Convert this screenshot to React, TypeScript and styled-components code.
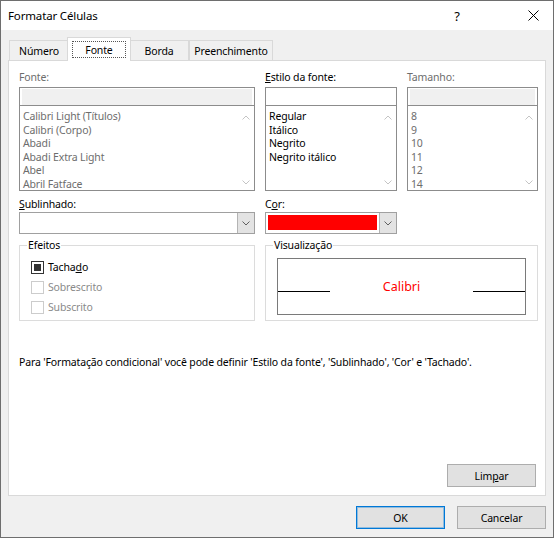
import styled, { createGlobalStyle } from "styled-components";

const GlobalStyle = createGlobalStyle`
  html, body {
    margin: 0;
    padding: 0;
    background: #ffffff;
  }
  body {
    font-family: "Noto Sans", "Liberation Sans", sans-serif;
    font-size: 10.5px;
    letter-spacing: -0.15px;
    color: #000;
  }
  * {
    box-sizing: border-box;
  }
`;

const fontes = [
  "Calibri Light (Títulos)",
  "Calibri (Corpo)",
  "Abadi",
  "Abadi Extra Light",
  "Abel",
  "Abril Fatface",
];
const estilos = ["Regular", "Itálico", "Negrito", "Negrito itálico"];
const tamanhos = ["8", "9", "10", "11", "12", "14"];

const Chevron = ({ up, color }: { up?: boolean; color: string }) => (
  <svg width="8" height="5" viewBox="0 0 8 5">
    <path
      d={up ? "M0.5 4.5 L4 1 L7.5 4.5" : "M0.5 0.5 L4 4 L7.5 0.5"}
      fill="none"
      stroke={color}
      strokeWidth="1"
    />
  </svg>
);

const App = () => {
  return (
    <>
      <GlobalStyle />
      <Window>
        <TitleBar>
          <Title>Formatar Células</Title>
          <TitleButtons>
            <Help>?</Help>
            <Close>
              <svg width="11" height="11" viewBox="0 0 11 11">
                <path d="M0.5 0.5 L10.5 10.5 M10.5 0.5 L0.5 10.5" stroke="#000" strokeWidth="1" />
              </svg>
            </Close>
          </TitleButtons>
        </TitleBar>
        <Body>
          <TabRow>
            <Tab $w={60}>Número</Tab>
            <Tab $w={60} $active>
              <Focus>Fonte</Focus>
            </Tab>
            <Tab $w={60}>Borda</Tab>
            <Tab $w={84}>Preenchimento</Tab>
          </TabRow>
          <Panel>
            <Fields>
              <Field>
                <Label $disabled>Fonte:</Label>
                <TextBox $disabled />
                <ListBox>
                  <Items $disabled>
                    {fontes.map((f) => (
                      <Item key={f}>{f}</Item>
                    ))}
                  </Items>
                  <ScrollTrack>
                    <Chevron up color="#c4c4c4" />
                    <Chevron color="#c4c4c4" />
                  </ScrollTrack>
                </ListBox>
              </Field>
              <Field>
                <Label>
                  <u>E</u>stilo da fonte:
                </Label>
                <TextBox />
                <ListBox>
                  <Items>
                    {estilos.map((f) => (
                      <Item key={f}>{f}</Item>
                    ))}
                  </Items>
                  <ScrollTrack>
                    <Chevron up color="#c4c4c4" />
                    <Chevron color="#c4c4c4" />
                  </ScrollTrack>
                </ListBox>
              </Field>
              <Field>
                <Label $disabled>Tamanho:</Label>
                <TextBox $disabled />
                <ListBox>
                  <Items $disabled>
                    {tamanhos.map((f) => (
                      <Item key={f}>{f}</Item>
                    ))}
                  </Items>
                  <ScrollTrack>
                    <Chevron up color="#c4c4c4" />
                    <Chevron color="#c4c4c4" />
                  </ScrollTrack>
                </ListBox>
              </Field>

              <Field $gap>
                <Label>
                  <u>S</u>ublinhado:
                </Label>
                <Combo>
                  <ComboValue />
                  <ComboButton>
                    <Chevron color="#606060" />
                  </ComboButton>
                </Combo>
              </Field>
              <Field $gap>
                <Label>
                  C<u>o</u>r:
                </Label>
                <Combo>
                  <ComboValue>
                    <Swatch />
                  </ComboValue>
                  <ComboButton>
                    <Chevron color="#606060" />
                  </ComboButton>
                </Combo>
              </Field>
              <div />

              <Group $span={1}>
                <Legend>Efeitos</Legend>
                <CheckRow>
                  <CheckBox $checked />
                  <span>
                    Tacha<u>d</u>o
                  </span>
                </CheckRow>
                <CheckRow $disabled>
                  <CheckBox $disabled />
                  <span>Sobrescrito</span>
                </CheckRow>
                <CheckRow $disabled>
                  <CheckBox $disabled />
                  <span>Subscrito</span>
                </CheckRow>
              </Group>
              <Group $span={2}>
                <Legend>Visualização</Legend>
                <Preview>
                  <Baseline />
                  <Sample>Calibri</Sample>
                  <Baseline />
                </Preview>
              </Group>
            </Fields>
            <Note>
              Para 'Formatação condicional' você pode definir 'Estilo da fonte', 'Sublinhado', 'Cor' e 'Tachado'.
            </Note>
            <PanelActions>
              <Button>
                Lim<u>p</u>ar
              </Button>
            </PanelActions>
          </Panel>
          <Footer>
            <Button $default>OK</Button>
            <Button>Cancelar</Button>
          </Footer>
        </Body>
      </Window>
    </>
  );
};
export default App;

const Window = styled.div`
  width: 554px;
  height: 538px;
  border: 1px solid #6e6e6e;
  background: #f0f0f0;
  display: flex;
  flex-direction: column;
`;

const TitleBar = styled.div`
  height: 29px;
  flex: none;
  background: #ffffff;
  display: flex;
  align-items: center;
  padding-left: 7px;
`;

const Title = styled.div`
  font-size: 11.5px;
  color: #000;
`;

const TitleButtons = styled.div`
  margin-left: auto;
  display: flex;
  align-items: center;
  gap: 55px;
  padding-right: 9px;
`;

const Help = styled.div`
  width: 20px;
  text-align: center;
  font-size: 13px;
`;

const Close = styled.div`
  width: 22px;
  height: 20px;
  display: flex;
  align-items: center;
  justify-content: center;
`;

const Body = styled.div`
  flex: 1;
  display: flex;
  flex-direction: column;
  padding: 7px 6px 0 7px;
`;

const TabRow = styled.div`
  height: 23px;
  display: flex;
  align-items: flex-end;
  padding-left: 1px;
`;

const Tab = styled.div<{ $w: number; $active?: boolean }>`
  flex: none;
  width: ${(p) => (p.$active ? p.$w + 4 : p.$w)}px;
  height: ${(p) => (p.$active ? 24 : 20)}px;
  margin: ${(p) => (p.$active ? "0 -2px -1px" : "0")};
  padding: ${(p) => (p.$active ? "3px 4px" : "1px 0 0")};
  position: relative;
  z-index: ${(p) => (p.$active ? 2 : 1)};
  background: ${(p) => (p.$active ? "#ffffff" : "#f0f0f0")};
  border: 1px solid #d9d9d9;
  border-bottom: none;
  display: flex;
  align-items: center;
  justify-content: center;
`;

const Focus = styled.div`
  width: 100%;
  height: 100%;
  border: 1px dotted #555;
  display: flex;
  align-items: center;
  justify-content: center;
`;

const Panel = styled.div`
  height: 436px;
  flex: none;
  margin-right: 1px;
  background: #ffffff;
  border: 1px solid #d9d9d9;
  padding: 8px 9px 8px 10px;
  display: flex;
  flex-direction: column;
`;

const Fields = styled.div`
  display: grid;
  grid-template-columns: 236px 132px 131px;
  column-gap: 10px;
`;

const Field = styled.div<{ $gap?: boolean }>`
  display: flex;
  flex-direction: column;
  margin-top: ${(p) => (p.$gap ? 5 : 0)}px;
`;

const Label = styled.div<{ $disabled?: boolean }>`
  height: 14px;
  line-height: 14px;
  margin-top: 1px;
  margin-bottom: 3px;
  color: ${(p) => (p.$disabled ? "#6d6d6d" : "#000")};
  white-space: nowrap;
`;

const TextBox = styled.div<{ $disabled?: boolean }>`
  height: 19px;
  border: 1px solid #8c8c8c;
  background: ${(p) => (p.$disabled ? "#f0f0f0" : "#ffffff")};
  background-clip: content-box;
  padding: 1px 2px 0;
`;

const ListBox = styled.div`
  height: 86px;
  margin-top: -1px;
  border: 1px solid #8c8c8c;
  display: flex;
  overflow: hidden;
`;

const Items = styled.div<{ $disabled?: boolean }>`
  flex: 1;
  padding: 4px 3px 0;
  color: ${(p) => (p.$disabled ? "#6d6d6d" : "#000")};
  overflow: hidden;
`;

const Item = styled.div`
  height: 13.6px;
  line-height: 13.6px;
  white-space: nowrap;
`;

const ScrollTrack = styled.div`
  width: 17px;
  flex: none;
  display: flex;
  flex-direction: column;
  justify-content: space-between;
  align-items: center;
  padding: 9px 0 5px;
`;

const Combo = styled.div`
  height: 22px;
  margin-top: -2px;
  border: 1px solid #a0a0a0;
  background: #ffffff;
  display: flex;
`;

const ComboValue = styled.div`
  flex: 1;
  padding: 2px 2px 3px 2px;
  display: flex;
`;

const Swatch = styled.div`
  flex: 1;
  background: #ff0000;
`;

const ComboButton = styled.div`
  width: 17px;
  flex: none;
  background: #e3e3e3;
  border-left: 1px solid #b4b4b4;
  display: flex;
  align-items: center;
  justify-content: center;
`;

const Group = styled.fieldset<{ $span: number }>`
  grid-column: span ${(p) => p.$span};
  margin: 4px 0 0;
  height: 83px;
  border: 1px solid #dcdcdc;
  padding: 0 11px 0 11px;
  min-width: 0;
`;

const Legend = styled.legend`
  padding: 0 1px;
  margin-left: -4px;
  line-height: 14px;
  height: 14px;
`;

const CheckRow = styled.div<{ $disabled?: boolean }>`
  height: 20px;
  display: flex;
  align-items: center;
  gap: 4px;
  color: ${(p) => (p.$disabled ? "#8a8a8a" : "#000")};
  &:first-of-type {
    margin-top: 5px;
  }
`;

const CheckBox = styled.div<{ $checked?: boolean; $disabled?: boolean }>`
  width: 13px;
  height: 13px;
  flex: none;
  border: 1px solid ${(p) => (p.$disabled ? "#cccccc" : "#333333")};
  background: #ffffff;
  padding: 2px;
  &::after {
    content: "";
    display: ${(p) => (p.$checked ? "block" : "none")};
    width: 100%;
    height: 100%;
    background: #333333;
  }
`;

const Preview = styled.div`
  margin-top: 6px;
  height: 57px;
  border: 1px solid #7a7a7a;
  display: flex;
  align-items: center;
`;

const Baseline = styled.div`
  width: 52px;
  height: 1px;
  margin-top: 10px;
  background: #000;
  flex: none;
`;

const Sample = styled.div`
  flex: 1;
  text-align: center;
  color: #ff0000;
  font-size: 12.5px;
  letter-spacing: 0;
`;

const Note = styled.div`
  margin-top: 34px;
  line-height: 14px;
  white-space: nowrap;
`;

const PanelActions = styled.div`
  margin-top: auto;
  display: flex;
  justify-content: flex-end;
`;

const Button = styled.button<{ $default?: boolean }>`
  width: 89px;
  height: 23px;
  font-family: inherit;
  font-size: 10.5px;
  letter-spacing: -0.15px;
  color: #000;
  background: #e1e1e1;
  border: 1px solid ${(p) => (p.$default ? "#0078d7" : "#adadad")};
  box-shadow: ${(p) => (p.$default ? "inset 0 0 0 1px rgba(0,120,215,0.35)" : "none")};
  padding: 0;
`;

const Footer = styled.div`
  margin-top: 10px;
  display: flex;
  justify-content: flex-end;
  gap: 12px;
  padding-right: 1px;
`;
